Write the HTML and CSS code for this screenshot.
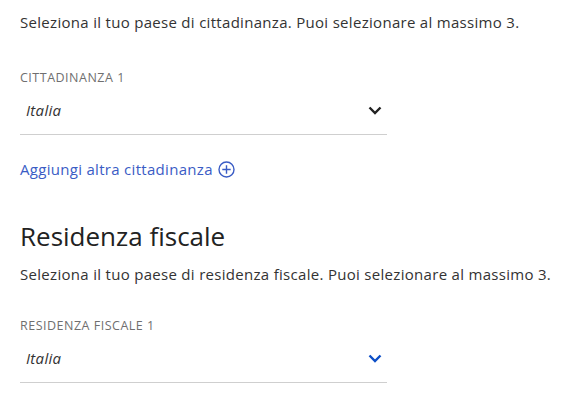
FILE: index.html
```html
<!DOCTYPE html>
<html lang="it">
<head>
<meta charset="UTF-8" />
<title>Cittadinanza e residenza fiscale</title>
<link rel="stylesheet" href="styles.css">
</head>
<body>
  <div class="page">
    <p class="intro">Seleziona il tuo paese di cittadinanza. Puoi selezionare al massimo 3.</p>

    <div class="field field-first">
      <label class="field-label">CITTADINANZA 1</label>
      <div class="select">
        <span class="select-value">Italia</span>
        <svg class="chevron" width="14" height="9" viewBox="0 0 14 9"><path d="M1.5 1.5 L7 7 L12.5 1.5" fill="none" stroke="#222" stroke-width="2.4"/></svg>
      </div>
    </div>

    <a class="add-link" href="#">Aggiungi altra cittadinanza
      <svg width="17" height="17" viewBox="0 0 17 17"><circle cx="8.5" cy="8.5" r="7.5" fill="none" stroke="#3a5cc5" stroke-width="1.4"/><path d="M8.5 4.3 V12.7 M4.3 8.5 H12.7" stroke="#3a5cc5" stroke-width="1.4"/></svg>
    </a>

    <h2 class="section-title">Residenza fiscale</h2>
    <p class="intro">Seleziona il tuo paese di residenza fiscale. Puoi selezionare al massimo 3.</p>

    <div class="field">
      <label class="field-label">RESIDENZA FISCALE 1</label>
      <div class="select">
        <span class="select-value">Italia</span>
        <svg class="chevron" width="14" height="9" viewBox="0 0 14 9"><path d="M1.5 1.5 L7 7 L12.5 1.5" fill="none" stroke="#0d4fc7" stroke-width="2.4"/></svg>
      </div>
    </div>
  </div>
</body>
</html>
```

FILE: styles.css
```css
body {
  margin: 0;
  background: #fff;
  font-family: "Open Sans", "DejaVu Sans", sans-serif;
  color: #333;
}
.page {
  padding: 12px 20px 0;
}
.intro {
  margin: 0;
  font-size: 15px;
  line-height: 20px;
  letter-spacing: 0.3px;
  color: #333;
}
.field {
  margin-top: 34px;
  width: 367px;
}
.field-first {
  margin-top: 38px;
}
.field-label {
  display: block;
  font-size: 12.5px;
  line-height: 16px;
  letter-spacing: 0.5px;
  color: #6f6f6f;
}
.select {
  display: flex;
  align-items: center;
  justify-content: space-between;
  height: 20px;
  padding: 14px 5px 14px 6px;
  border-bottom: 1px solid #cfcfcf;
}
.select-value {
  font-size: 15px;
  line-height: 20px;
  font-style: italic;
  letter-spacing: 0.3px;
  color: #333;
}
.add-link {
  display: inline-flex;
  align-items: center;
  gap: 5px;
  margin-top: 24px;
  font-size: 15px;
  line-height: 20px;
  letter-spacing: 0.3px;
  color: #3a5cc5;
  text-decoration: none;
}
.section-title {
  margin: 39px 0 11px;
  font-size: 26px;
  line-height: 34px;
  font-weight: 400;
  color: #222;
}
```
